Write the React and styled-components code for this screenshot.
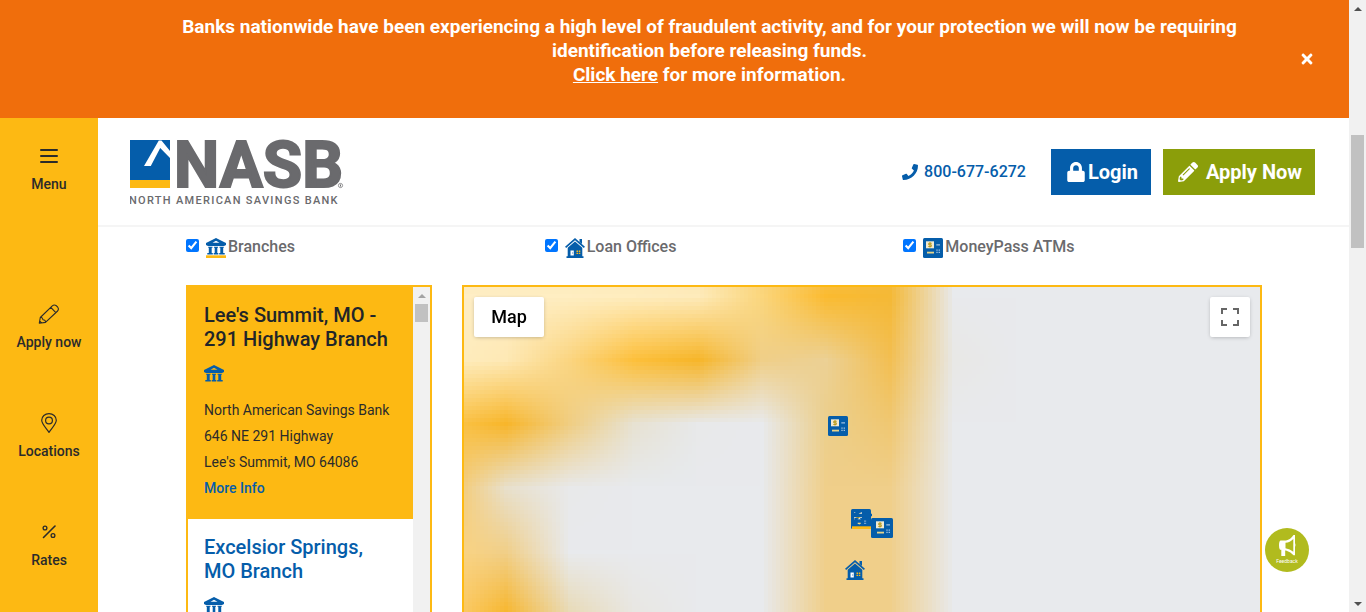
import React, { useLayoutEffect, useRef } from "react";
import styled, { createGlobalStyle, css } from "styled-components";
import { FaLock, FaPencilAlt, FaPhone, FaTimes } from "react-icons/fa";

const colors = {
  orange: "#f06e0c",
  gold: "#fdb913",
  blue: "#055daa",
  green: "#8b9e0a",
  lime: "#b1bb1e",
  ink: "#2b2b2b",
  grey: "#6a6a6d",
  land: "#e8eaed",
};

const GlobalStyle = createGlobalStyle`
  *, *::before, *::after { box-sizing: border-box; }
  body {
    margin: 0;
    overflow: hidden;
    background: #fff;
    color: ${colors.ink};
    font-family: Roboto, "Liberation Sans", sans-serif;
    font-size: 16px;
  }
  svg { display: block; flex: none; }
`;

/* ---------- shell ---------- */

const Shell = styled.div`
  display: flex;
  height: 100vh;
  overflow: hidden;
`;

const Page = styled.div`
  flex: 1;
  min-width: 0;
  display: flex;
  flex-direction: column;
`;

const Body = styled.div`
  flex: 1;
  min-height: 0;
  display: flex;
`;

const Content = styled.div`
  flex: 1;
  min-width: 0;
  display: flex;
  flex-direction: column;
`;

/* ---------- alert banner ---------- */

const Banner = styled.section`
  display: flex;
  align-items: center;
  min-height: 118px;
  padding: 0 34px 0 140px;
  background: ${colors.orange};
  color: #fff;
`;

const BannerText = styled.p`
  flex: 1;
  margin: 0;
  padding: 0 20px 16px 0;
  font-size: 19px;
  font-weight: 700;
  line-height: 24px;
  text-align: center;
`;

const BannerLink = styled.a`
  color: inherit;
  text-decoration: underline;
`;

const CloseButton = styled.button`
  display: flex;
  padding: 0;
  border: 0;
  background: none;
  color: #fff;
  cursor: pointer;
`;

/* ---------- sidebar ---------- */

const Sidebar = styled.nav`
  flex: none;
  width: 98px;
  background: ${colors.gold};
`;

const sideItem = css`
  display: flex;
  flex-direction: column;
  align-items: center;
  gap: 8px;
  width: 100%;
  height: 109px;
  padding: 0;
  border: 0;
  background: none;
  color: ${colors.ink};
  font: 500 14px/20px Roboto, "Liberation Sans", sans-serif;
  text-decoration: none;
  cursor: pointer;
`;

const MenuButton = styled.button`
  ${sideItem}
  height: 158px;
  margin-top: 28px;
`;

const SideLink = styled.a`
  ${sideItem}
`;

/* ---------- header ---------- */

const Header = styled.header`
  display: flex;
  align-items: center;
  height: 109px;
  padding: 0 34px 0 32px;
  border-bottom: 2px solid #f5f5f5;
`;

const HomeLink = styled.a`
  margin-right: auto;
  color: ${colors.grey};
`;

const Phone = styled.a`
  display: flex;
  align-items: center;
  gap: 6px;
  margin-right: 25px;
  color: ${colors.blue};
  font-weight: 500;
  line-height: 20px;
  text-decoration: none;
`;

const ActionButton = styled.button`
  display: flex;
  align-items: center;
  justify-content: center;
  gap: ${(p) => p.$gap}px;
  height: 46px;
  padding: 0 13px 0 15px;
  border: 0;
  background: ${(p) => p.$color};
  color: #fff;
  font: 700 20px/24px Roboto, "Liberation Sans", sans-serif;
  cursor: pointer;

  & + & { margin-left: 12px; }
`;

/* ---------- locator ---------- */

const Locator = styled.main`
  flex: 1;
  min-height: 0;
  display: flex;
  flex-direction: column;
  padding: 0 87px 0 88px;
`;

const Filters = styled.form`
  display: grid;
  grid-template-columns: repeat(3, 1fr);
  height: 58px;
  padding-top: 10px;
`;

const Filter = styled.label`
  display: flex;
  align-items: flex-start;
  color: ${colors.grey};
  font-weight: 500;
  line-height: 20px;

  svg { margin: 1px 2px 0 7px; }
`;

const Tick = styled.input`
  width: 13px;
  height: 13px;
  margin: 2px 0 0;
  accent-color: #0075ff;
`;

const Results = styled.div`
  flex: 1;
  min-height: 0;
  display: grid;
  grid-template-columns: 246px 1fr;
  gap: 30px;
`;

const ListPanel = styled.section`
  display: flex;
  min-height: 0;
  overflow: hidden;
  border: 2px solid ${colors.gold};
  border-bottom: 0;
`;

const CardList = styled.ul`
  flex: 1;
  margin: 0;
  padding: 0;
  list-style: none;
`;

const Card = styled.li`
  height: 232px;
  padding: 16px 16px 18px;
  background: ${(p) => (p.$active ? colors.gold : "#fff")};
  font-size: 14px;
  line-height: 26px;

  svg { margin: 14px 0 12px; }
`;

const CardTitle = styled.h2`
  margin: 0;
  color: ${(p) => (p.$active ? "#212529" : colors.blue)};
  font-size: 20px;
  font-weight: 500;
  line-height: 24px;
`;

const Address = styled.address`
  font-style: normal;
`;

const MoreInfo = styled.a`
  color: ${colors.blue};
  font-weight: 500;
  text-decoration: none;
`;

/* ---------- scroll bars ---------- */

const Track = styled.div`
  flex: none;
  display: flex;
  flex-direction: column;
  align-items: center;
  justify-content: space-between;
  width: 17px;
  background: #f1f1f1;
`;

const Thumb = styled.div`
  width: 13px;
  height: ${(p) => p.$size}px;
  margin-top: ${(p) => p.$offset}px;
  margin-bottom: auto;
  background: #c1c1c1;
`;

const Arrow = styled.div`
  width: 0;
  height: 0;
  margin: 7px 0 6px;
  border: 4px solid transparent;
  border-top-width: ${(p) => (p.$down ? 4 : 0)}px;
  border-bottom-width: ${(p) => (p.$down ? 0 : 4)}px;
  border-top-color: #505050;
  border-bottom-color: ${(p) => (p.$muted ? "#a3a3a3" : "#505050")};
`;

/* ---------- map ---------- */

const MapFrame = styled.section`
  position: relative;
  overflow: hidden;
  border: 2px solid ${colors.gold};
  border-bottom: 0;
  background: ${colors.land};
`;

const Terrain = styled.canvas`
  display: block;
`;

const mapControl = css`
  position: absolute;
  top: 10px;
  height: 40px;
  padding: 0;
  border: 0;
  border-radius: 2px;
  background: #fff;
  box-shadow: 0 1px 4px -1px rgba(0, 0, 0, 0.3);
  cursor: pointer;
`;

const MapTypeButton = styled.button`
  ${mapControl}
  left: 10px;
  width: 70px;
  color: #000;
  font: 500 18px/24px Roboto, "Liberation Sans", sans-serif;
`;

const FullscreenButton = styled.button`
  ${mapControl}
  right: 10px;
  width: 40px;
  display: grid;
  place-items: center;
`;

const Marker = styled.div`
  position: absolute;
  left: ${(p) => p.$x}px;
  top: ${(p) => p.$y}px;
`;

const FeedbackButton = styled.button`
  position: fixed;
  right: 57px;
  bottom: 40px;
  display: flex;
  flex-direction: column;
  align-items: center;
  width: 44px;
  height: 44px;
  padding: 7px 0 0;
  border: 0;
  border-radius: 50%;
  background: ${colors.lime};
  color: #fff;
  font: 400 5px/8px Roboto, "Liberation Sans", sans-serif;
  cursor: pointer;
`;

/* ---------- drawings ---------- */

const Logo = () => (
  <svg width="216" height="66" viewBox="0 0 216 66" role="img" aria-label="NASB">
    <path fill={colors.blue} d="M0 1h40v40H0z" />
    <path fill={colors.gold} d="M0 41h40v8H0z" />
    <path fill="#fff" d="M14 27 28.800 1.500h2.700L40 12v7L30.200 9 20.800 27z" />
    <text
      x="44"
      y="48"
      fill={colors.grey}
      stroke={colors.grey}
      strokeWidth="2"
      fontFamily="Roboto"
      fontWeight="700"
      fontSize="64"
    >
      NASB
    </text>
    <circle cx="210.500" cy="46.500" r="2.100" fill="none" stroke={colors.grey} strokeWidth=".7" />
    <path fill={colors.grey} d="M210 45.500h1v2h-1z" />
    <text x="-1" y="65" fill={colors.grey} fontFamily="Roboto" fontWeight="500" fontSize="11" letterSpacing="1.300">
      NORTH AMERICAN SAVINGS BANK
    </text>
  </svg>
);

const BankIcon = () => (
  <svg width="20" height="20" viewBox="0 0 20 20" aria-hidden="true">
    <path fill={colors.blue} fillRule="evenodd" d="M10 0l10 5v2.300h-1.300V8H1.300v-.7H0V5zM10 2.800 6.500 4.700h7z" />
    <path
      fill={colors.blue}
      d="M2.200 8.700h4.300v1H5.700v5.300h1.100v1.500H1.300v-1.500h1.500V9.700h-.6zM8 8.700h4v1h-.7v5.300h1v1.500H7.700v-1.500h1V9.700H8zM13.500 8.700h4.300v1h-.6v5.300h1.500v1.500h-5.500v-1.500h1.100V9.700h-.8z"
    />
    <path fill={colors.gold} d="M0 17.300h20V20H0z" />
  </svg>
);

const HouseIcon = () => (
  <svg width="20" height="20" viewBox="0 0 20 20" aria-hidden="true">
    <path fill="none" stroke={colors.blue} strokeWidth="1.700" d="M.6 9.300 10 1.200l9.400 8.100" />
    <path fill={colors.blue} d="M14.500 1H17v5l-2.500-2zM10 3.500l7.300 6.300v8.400h1.200V20h-17v-1.800h1.200V9.800z" />
    <path fill="#fff" d="M5.500 12.500h3.300v5H5.500z" />
    <path fill={colors.blue} d="M7.300 14.500h.8v1h-.8z" />
    <path fill={colors.gold} d="M11.500 12.500h1.500v1.400h-1.500zM13.800 12.500h1.500v1.400h-1.500zM11.500 14.700h1.500v1.400h-1.500zM13.800 14.700h1.500v1.400h-1.500z" />
  </svg>
);

const AtmIcon = () => (
  <svg width="20" height="20" viewBox="0 0 20 20" aria-hidden="true">
    <rect width="20" height="20" rx="1.500" fill={colors.blue} />
    <path fill="#f3ead0" d="M3 3.300h8v7H3z" />
    <path fill="none" stroke="#b79a1f" strokeWidth="1" d="M8.700 5.300H5.700v1.500h2.600V8.500H5.300M7 4v5.600" />
    <path fill="#e8d48a" d="M4 13.700h7v1.800H4z" />
    <path fill="#9dbfe0" d="M13.300 6.300h3.700v1.200h-3.700zM13.300 11.500h1.400v1.300h-1.400zM15.600 11.500H17v1.300h-1.400zM13.300 13.800h1.400v1.300h-1.400zM15.600 13.800H17v1.300h-1.400z" />
  </svg>
);

const lineIcon = { fill: "none", stroke: "currentColor", "aria-hidden": true };

const MenuIcon = () => (
  <svg width="20" height="20" viewBox="0 0 20 20" strokeWidth="2" strokeLinecap="round" {...lineIcon}>
    <path d="M2 4h16M2 10h16M2 16h16" />
  </svg>
);

const PencilIcon = () => (
  <svg width="22" height="20" viewBox="0 0 22 20" strokeWidth="1.100" strokeLinejoin="round" {...lineIcon}>
    <path d="M1.300 19.200 2.300 13.500 14.300 1.800q2-1.700 4.100 0l1.200 1.200q1.600 2 0 4L7.500 18.400zM12.800 3.300l5 5.300M2.300 13.500q2.200-.5 2.600 2.200 2.700 0 2.600 2.700M1.600 17l2 2" />
  </svg>
);

const PinIcon = () => (
  <svg width="20" height="20" viewBox="0 0 20 20" strokeWidth="1.200" {...lineIcon}>
    <path d="M10 19.300C7 15 2.700 10.800 2.700 7.300a7.300 6.700 0 0 1 14.600 0C17.300 10.800 13 15 10 19.300z" />
    <circle cx="10" cy="7.500" r="3.400" />
  </svg>
);

const PercentIcon = () => (
  <svg width="20" height="20" viewBox="0 0 20 20" strokeWidth="1.300" strokeLinecap="round" {...lineIcon}>
    <circle cx="6" cy="6" r="1.900" />
    <circle cx="14" cy="13.500" r="1.900" />
    <path strokeWidth="1.600" d="M16 4 4.500 15.500" />
  </svg>
);

const FullscreenIcon = () => (
  <svg width="18" height="18" viewBox="0 0 18 18" aria-hidden="true">
    <path fill="#666" d="M0 0h6v2H2v4H0zM12 0h6v6h-2V2h-4zM0 12h2v4h4v2H0zM16 12h2v6h-6v-2h4z" />
  </svg>
);

const MegaphoneIcon = () => (
  <svg width="18" height="22" viewBox="0 0 18 22" aria-hidden="true">
    <path fill="#fff" fillRule="evenodd" d="M2.500 5.500h5.500Q12.500 4.500 15.500 0H17v8q1 2 0 4v8.300h-1.500Q13 17 8 15.500h-.8V21H3.300v-6.200H2q-1-1-1-4.500 0-4.300 1.500-4.800zM15.300 4Q12 7.500 7.500 7.800v5.400q4.500.5 7.800 3.600z" />
  </svg>
);

/* ---------- terrain ---------- */

const CELL = 64;
const G = "#e8eaed";
const SAND = "#f0cf8a";
const TERRAIN = [
  ["#fcdf9a", "#fce3a4", "#fce3a4", "#fce3a4", "#fcdf9c", "#f8cf78", "#f0cf88", "#f2c254", G, G, G],
  ["#ffeec6", "#ffeec4", "#ffeec2", "#ffedbf", "#feebbb", "#fbd67c", "#fbbb30", "#f5b936", G, G, G],
  ["#ffeec0", "#fee9b5", "#fbd580", "#fdc03c", "#f7b62a", "#f0cf88", "#ecd195", "#f3bf52", "#e8e8e6", G, G],
  ["#fbc650", "#f8b62b", "#f0ce83", "#e7e2d2", "#e8e9ea", G, "#eccf8c", "#f0c872", G, G, G],
  ["#f9c458", "#e8e0cc", "#e8e9ea", G, G, G, SAND, SAND, G, G, G],
  ["#fdd582", "#f1cf88", G, G, G, G, SAND, SAND, G, G, G],
  ["#fcd27c", "#f8b62b", "#e9dab4", "#e8e7e2", G, G, SAND, SAND, G, G, G],
  ["#fcd27c", "#f8c658", "#e9d4a0", "#e8e6de", G, G, SAND, SAND, G, G, G],
];

function TerrainLayer() {
  const ref = useRef(null);
  useLayoutEffect(() => {
    const grid = document.createElement("canvas");
    grid.width = TERRAIN[0].length;
    grid.height = TERRAIN.length;
    const g = grid.getContext("2d");
    TERRAIN.forEach((row, y) =>
      row.forEach((color, x) => {
        g.fillStyle = color;
        g.fillRect(x, y, 1, 1);
      })
    );
    const ctx = ref.current.getContext("2d");
    ctx.imageSmoothingEnabled = true;
    ctx.imageSmoothingQuality = "low";
    ctx.drawImage(grid, -56, -89, grid.width * CELL, grid.height * CELL);
  }, []);
  return <Terrain ref={ref} width={648} height={420} aria-hidden="true" />;
}

/* ---------- data ---------- */

const sideLinks = [
  { label: "Apply now", icon: <PencilIcon /> },
  { label: "Locations", icon: <PinIcon /> },
  { label: "Rates", icon: <PercentIcon /> },
];

const filters = [
  { label: "Branches", icon: <BankIcon /> },
  { label: "Loan Offices", icon: <HouseIcon /> },
  { label: "MoneyPass ATMs", icon: <AtmIcon /> },
];

const branches = [
  {
    name: "Lee's Summit, MO - 291 Highway Branch",
    lines: ["North American Savings Bank", "646 NE 291 Highway", "Lee's Summit, MO 64086"],
    active: true,
  },
  { name: "Excelsior Springs, MO Branch", lines: [] },
];

const markers = [
  { x: 364, y: 129, icon: <AtmIcon /> },
  { x: 387, y: 222, icon: <AtmIcon /> },
  { x: 388, y: 222, icon: <BankIcon /> },
  { x: 407, y: 231, icon: <AtmIcon /> },
  { x: 409, y: 231, icon: <AtmIcon /> },
  { x: 381, y: 273, icon: <HouseIcon /> },
];

export default function App() {
  return (
    <Shell>
      <GlobalStyle />
      <Page>
        <Banner>
          <BannerText>
            Banks nationwide have been experiencing a high level of fraudulent activity, and for your
            protection we will now be requiring identification before releasing funds.
            <br />
            <BannerLink href="#alert">Click here</BannerLink> for more information.
          </BannerText>
          <CloseButton type="button" aria-label="Close">
            <FaTimes size={16} />
          </CloseButton>
        </Banner>
        <Body>
          <Sidebar>
            <MenuButton type="button">
              <MenuIcon />
              Menu
            </MenuButton>
            {sideLinks.map((item) => (
              <SideLink key={item.label} href="#nav">
                {item.icon}
                {item.label}
              </SideLink>
            ))}
          </Sidebar>
          <Content>
            <Header>
              <HomeLink href="#home">
                <Logo />
              </HomeLink>
              <Phone href="tel:8006776272">
                <FaPhone size={16} />
                800-677-6272
              </Phone>
              <ActionButton type="button" $color={colors.blue} $gap={2}>
                <FaLock size={20} />
                Login
              </ActionButton>
              <ActionButton type="button" $color={colors.green} $gap={8}>
                <FaPencilAlt size={20} />
                Apply Now
              </ActionButton>
            </Header>
            <Locator>
              <Filters>
                {filters.map((item) => (
                  <Filter key={item.label}>
                    <Tick type="checkbox" defaultChecked />
                    {item.icon}
                    {item.label}
                  </Filter>
                ))}
              </Filters>
              <Results>
                <ListPanel>
                  <CardList>
                    {branches.map((branch) => (
                      <Card key={branch.name} $active={branch.active}>
                        <CardTitle $active={branch.active}>{branch.name}</CardTitle>
                        <BankIcon />
                        <Address>
                          {branch.lines.map((line) => (
                            <div key={line}>{line}</div>
                          ))}
                        </Address>
                        {branch.active && <MoreInfo href="#branch">More Info</MoreInfo>}
                      </Card>
                    ))}
                  </CardList>
                  <Track aria-hidden="true">
                    <Arrow $muted />
                    <Thumb $size={18} $offset={0} />
                  </Track>
                </ListPanel>
                <MapFrame>
                  <TerrainLayer />
                  {markers.map((m) => (
                    <Marker key={`${m.x}-${m.y}`} $x={m.x} $y={m.y}>
                      {m.icon}
                    </Marker>
                  ))}
                  <MapTypeButton type="button">Map</MapTypeButton>
                  <FullscreenButton type="button" aria-label="Toggle fullscreen view">
                    <FullscreenIcon />
                  </FullscreenButton>
                </MapFrame>
              </Results>
            </Locator>
          </Content>
        </Body>
      </Page>
      <Track aria-hidden="true">
        <Arrow />
        <Thumb $size={113} $offset={118} />
        <Arrow $down />
      </Track>
      <FeedbackButton type="button">
        <MegaphoneIcon />
        Feedback
      </FeedbackButton>
    </Shell>
  );
}
